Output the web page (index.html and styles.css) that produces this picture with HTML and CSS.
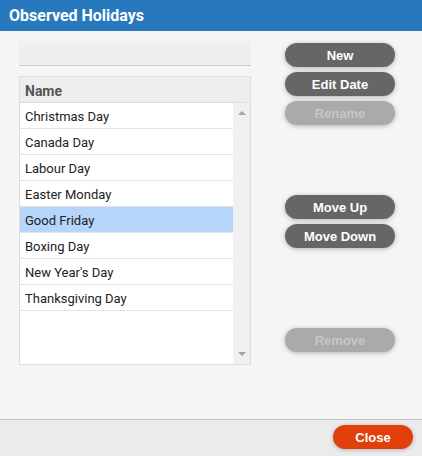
FILE: index.html
```html
<!DOCTYPE html>
<html>
<head>
<meta charset="utf-8">
<link rel="stylesheet" href="styles.css">
</head>
<body>
<div class="dialog">
  <div class="titlebar">Observed Holidays</div>
  <div class="content">
    <div class="left">
      <div class="filter"></div>
      <div class="grid">
        <div class="grid-head">Name</div>
        <div class="grid-body">
          <div class="rows">
            <div class="row">Christmas Day</div>
            <div class="row">Canada Day</div>
            <div class="row">Labour Day</div>
            <div class="row">Easter Monday</div>
            <div class="row selected">Good Friday</div>
            <div class="row">Boxing Day</div>
            <div class="row">New Year's Day</div>
            <div class="row">Thanksgiving Day</div>
          </div>
          <div class="scrollbar">
            <span class="arrow up"></span>
            <span class="arrow down"></span>
          </div>
        </div>
      </div>
    </div>
    <div class="right">
      <button class="btn">New</button>
      <button class="btn">Edit Date</button>
      <button class="btn disabled">Rename</button>
      <button class="btn group2">Move Up</button>
      <button class="btn">Move Down</button>
      <button class="btn disabled group3">Remove</button>
    </div>
  </div>
  <div class="footer">
    <button class="close">Close</button>
  </div>
</div>
</body>
</html>
```
FILE: styles.css
```css
* { box-sizing: border-box; }
html, body { margin: 0; padding: 0; }
body {
  width: 422px;
  height: 456px;
  background: #f5f5f5;
  font-family: Roboto, "Liberation Sans", sans-serif;
  overflow: hidden;
}
.dialog {
  display: flex;
  flex-direction: column;
  height: 456px;
}
.titlebar {
  height: 31px;
  background: #2878bd;
  color: #fff;
  font-weight: bold;
  font-size: 16px;
  line-height: 31px;
  padding-left: 9px;
}
.content {
  flex: 1;
  display: flex;
  padding-left: 19px;
}
.left {
  width: 232px;
  padding-top: 10px;
}
.filter {
  height: 25px;
  background: #efefef;
  border-bottom: 1px solid #cdcdcd;
}
.grid {
  margin-top: 10px;
  border: 1px solid #dedede;
  background: #fff;
}
.grid-head {
  height: 26px;
  background: #eeeeee;
  border-bottom: 1px solid #dedede;
  font-weight: bold;
  font-size: 14px;
  color: #555;
  line-height: 24px;
  padding: 2px 0 0 5px;
}
.grid-body {
  display: flex;
  height: 261px;
}
.rows {
  flex: 1;
}
.row {
  height: 26px;
  border-bottom: 1px solid #e3e3e3;
  font-size: 13px;
  color: #222;
  line-height: 24px;
  padding: 2px 0 0 5px;
}
.row.selected {
  background: #b5d5fb;
}
.scrollbar {
  width: 17px;
  background: #f0f0f0;
  display: flex;
  flex-direction: column;
  justify-content: space-between;
  align-items: center;
  padding: 8px 0 8px;
}
.arrow {
  width: 0;
  height: 0;
  border-left: 4px solid transparent;
  border-right: 4px solid transparent;
}
.arrow.up { border-bottom: 4px solid #a3a3a3; }
.arrow.down { border-top: 4px solid #a3a3a3; }
.right {
  margin-left: 34px;
  padding-top: 12px;
  display: flex;
  flex-direction: column;
  gap: 5px;
}
.btn {
  width: 110px;
  height: 24px;
  border: none;
  border-radius: 12px;
  background: #666666;
  color: #fff;
  font-family: "Liberation Sans", Arial, sans-serif;
  font-size: 13px;
  font-weight: bold;
  padding: 0;
  box-shadow: 0 1px 5px rgba(0,0,0,0.28);
}
.btn.disabled {
  background: #aaaaaa;
  color: #c6c6c6;
}
.btn.group2 { margin-top: 65px; }
.btn.group3 { margin-top: 75px; }
.footer {
  height: 37px;
  border-top: 1px solid #c4c4c4;
  background: #ebebeb;
  display: flex;
  justify-content: flex-end;
  align-items: flex-start;
  padding: 5px 9px 0 0;
}
.close {
  width: 80px;
  height: 24px;
  border: none;
  border-radius: 12px;
  background: #e2400b;
  color: #fff;
  font-family: "Liberation Sans", Arial, sans-serif;
  font-size: 13px;
  font-weight: bold;
  padding: 0;
  box-shadow: 0 1px 4px rgba(0,0,0,0.25);
}
```
